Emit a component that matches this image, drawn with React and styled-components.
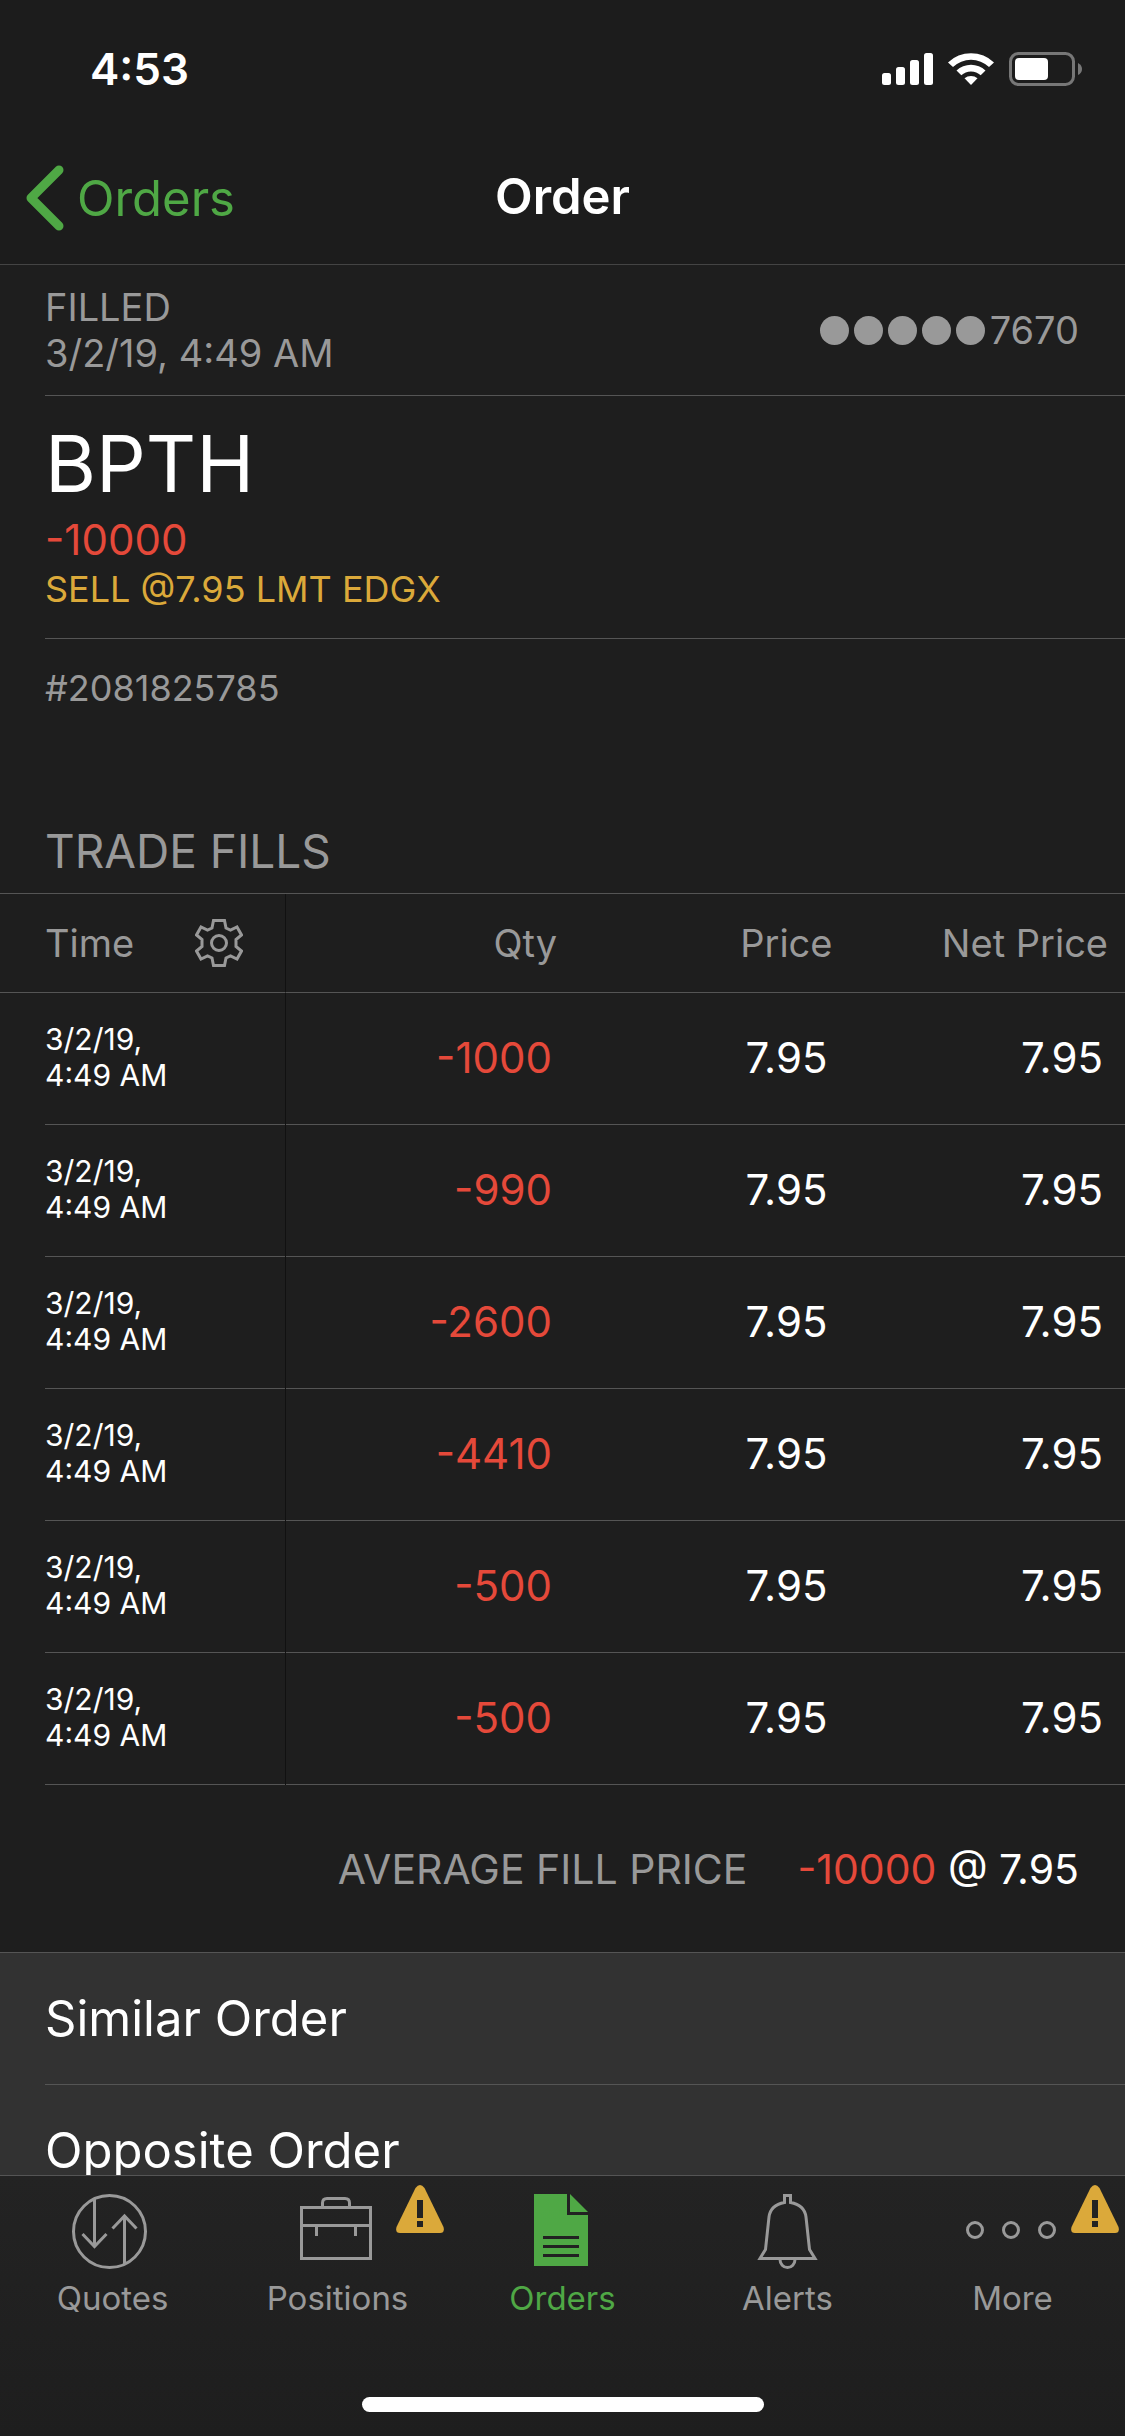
import React from "react";
import styled, { createGlobalStyle } from "styled-components";

const fills = [
  { id: 1, date: "3/2/19,", time: "4:49 AM", qty: "-1000", price: "7.95", net: "7.95" },
  { id: 2, date: "3/2/19,", time: "4:49 AM", qty: "-990", price: "7.95", net: "7.95" },
  { id: 3, date: "3/2/19,", time: "4:49 AM", qty: "-2600", price: "7.95", net: "7.95" },
  { id: 4, date: "3/2/19,", time: "4:49 AM", qty: "-4410", price: "7.95", net: "7.95" },
  { id: 5, date: "3/2/19,", time: "4:49 AM", qty: "-500", price: "7.95", net: "7.95" },
  { id: 6, date: "3/2/19,", time: "4:49 AM", qty: "-500", price: "7.95", net: "7.95" },
];

const QuotesIcon = () => (
  <TabIcon viewBox="0 0 81 76">
    <circle cx="37.5" cy="37.5" r="36" />
    <path d="M22.5 5v47M10.5 40l12 12.5 12-12.5M52.5 70V23M40.500 34.500l12-12.500 12 12.500" />
  </TabIcon>
);

const PositionsIcon = () => (
  <TabIcon viewBox="0 0 81 76">
    <path d="M4.500 13.500h69v51h-69zM4.500 31.500h69M19.500 32v10M58.500 32v10M25.500 13v-4q0-4.500 4.500-4.500h18q4.500 0 4.500 4.500v4" />
  </TabIcon>
);

const OrdersIcon = () => (
  <TabIcon viewBox="0 0 81 76">
    <path
      fill="currentColor"
      stroke="none"
      fillRule="evenodd"
      d="M12 0h33v21h21v51H12zM21 42v3h36v-3zM21 51v3h36v-3zM21 60v3h36v-3zM48 0l18 18H48z"
    />
  </TabIcon>
);

const AlertsIcon = () => (
  <TabIcon viewBox="0 0 81 76">
    <path d="M37.500 8.500v-7h6v7C52 10 58 15 59 23l3.500 32.500 5.500 9h-55l5.500-9L22 23c1-8 7-13 15.500-14.500z" />
    <path d="M33 65.500a7.500 8 0 0 0 15 0" />
  </TabIcon>
);

const MoreIcon = () => (
  <TabIcon viewBox="0 0 81 76">
    <circle cx="3" cy="36" r="7.500" />
    <circle cx="39" cy="36" r="7.500" />
    <circle cx="75" cy="36" r="7.500" />
  </TabIcon>
);

const tabs = [
  { label: "Quotes", icon: <QuotesIcon /> },
  { label: "Positions", icon: <PositionsIcon />, warning: true },
  { label: "Orders", icon: <OrdersIcon />, active: true },
  { label: "Alerts", icon: <AlertsIcon /> },
  { label: "More", icon: <MoreIcon />, warning: true },
];

export default function App() {
  return (
    <Screen>
      <GlobalStyle />
      <StatusBar>
        <span>4:53</span>
        <StatusIcons viewBox="0 0 200 34" aria-hidden="true">
          <g fill="#fff">
            <rect x="0" y="21" width="9" height="12" rx="2.500" />
            <rect x="14" y="15" width="9" height="18" rx="2.500" />
            <rect x="28" y="8" width="9" height="25" rx="2.500" />
            <rect x="42" y="1" width="9" height="32" rx="2.500" />
            <path d="M66 10.500a33 33 0 0 1 46 0l-5 4.500a26 26 0 0 0-36 0z" />
            <path d="M74.500 18.500a21 21 0 0 1 29 0l-4.800 4.800a14 14 0 0 0-19.400 0z" />
            <path d="M82.500 26.300a10 10 0 0 1 13 0L89 33z" />
            <rect x="133" y="6" width="33" height="22" rx="4" />
          </g>
          <rect x="128.500" y="1.500" width="63" height="31" rx="8" fill="none" stroke="#777" strokeWidth="3" />
          <path d="M196 11q4 2 4 6t-4 6z" fill="#777" />
        </StatusIcons>
      </StatusBar>
      <NavBar>
        <BackLink href="#orders">
          <Chevron viewBox="0 0 38 66" aria-hidden="true">
            <path d="M33 5L5 33l28 28" />
          </Chevron>
          Orders
        </BackLink>
        <Title>Order</Title>
      </NavBar>

      <Content>
        <Account>
          <div>
            FILLED
            <br />
            3/2/19, 4:49 AM
          </div>
          <AccountNumber>
            <Dot />
            <Dot />
            <Dot />
            <Dot />
            <Dot />
            7670
          </AccountNumber>
        </Account>
        <Summary>
          <Symbol>BPTH</Symbol>
          <Quantity>-10000</Quantity>
          <Detail>SELL @7.95 LMT EDGX</Detail>
        </Summary>
        <OrderId>#2081825785</OrderId>

        <SectionTitle>TRADE FILLS</SectionTitle>
        <Table>
          <thead>
            <tr>
              <TimeHead>
                <TimeLabel>
                  Time
                  <GearButton aria-label="Column settings">
                    <svg width="48" height="48" viewBox="0 0 48 48" fill="none" stroke="currentColor" strokeWidth="3">
                      <path d="M18.500 1.500h11l1.500 7.500 4.500 2 6.500-3 4.500 8-5.500 4.500v7l5.500 4.500-4.500 8-6.500-3-4.500 2-1.500 7.500h-11L17 39l-4.500-2L6 40l-4.500-8L7 27.500v-7L1.500 16 6 8l6.500 3L17 9z" />
                      <circle cx="24" cy="24" r="7.500" />
                    </svg>
                  </GearButton>
                </TimeLabel>
              </TimeHead>
              <QtyHead>Qty</QtyHead>
              <Head>Price</Head>
              <Head>Net Price</Head>
            </tr>
          </thead>
          <tbody>
            {fills.map((fill) => (
              <tr key={fill.id}>
                <TimeCell>
                  <FillTime>
                    {fill.date}
                    <br />
                    {fill.time}
                  </FillTime>
                </TimeCell>
                <Cell $negative>{fill.qty}</Cell>
                <Cell>{fill.price}</Cell>
                <Cell>{fill.net}</Cell>
              </tr>
            ))}
          </tbody>
        </Table>
        <Average>
          <AverageLabel>AVERAGE FILL PRICE</AverageLabel>
          <span>
            <Negative>-10000</Negative> @ 7.95
          </span>
        </Average>

        <Actions>
          <ActionButton>Similar Order</ActionButton>
          <ActionButton>Opposite Order</ActionButton>
        </Actions>
      </Content>

      <TabBar>
        <Tabs>
          {tabs.map((tab) => (
            <Tab key={tab.label} href={"#" + tab.label.toLowerCase()} $active={tab.active}>
              {tab.icon}
              {tab.label}
              {tab.warning && (
                <Warning viewBox="0 0 48 48" aria-hidden="true">
                  <path d="M19.500 3Q24-3 28.500 3L47.500 42Q49 48 44 48H4Q-1 48 .500 42z" fill="#dba93a" />
                  <path d="M21 15h6v18h-6zM21 36h6v6h-6z" fill="#222" />
                </Warning>
              )}
            </Tab>
          ))}
        </Tabs>
        <HomeIndicator />
      </TabBar>
    </Screen>
  );
}

const GlobalStyle = createGlobalStyle`
  * {
    box-sizing: border-box;
  }
  body {
    margin: 0;
    background: #1e1e1e;
    color: #fff;
    font-family: Inter, "Liberation Sans", sans-serif;
  }
  button {
    font-family: inherit;
    color: inherit;
    background: none;
    border: 0;
    padding: 0;
    cursor: pointer;
  }
`;
const Screen = styled.div`
  display: flex;
  flex-direction: column;
  height: 100vh;
`;
const StatusBar = styled.div`
  display: flex;
  flex: none;
  align-items: center;
  justify-content: space-between;
  height: 132px;
  padding: 6px 43px 0 90px;
  background: #1c1c1c;
  font-size: 44px;
  font-weight: 600;
`;
const StatusIcons = styled.svg`
  width: 200px;
  height: 34px;
`;
const NavBar = styled.header`
  display: grid;
  flex: none;
  grid-template-columns: 1fr auto 1fr;
  align-items: center;
  height: 133px;
  padding: 0 26px;
  background: #1c1c1c;
  border-bottom: 1px solid #444;
`;
const BackLink = styled.a`
  display: flex;
  align-items: center;
  gap: 13px;
  color: #4fa845;
  font-size: 49px;
  text-decoration: none;
`;
const Chevron = styled.svg`
  width: 38px;
  height: 66px;
  fill: none;
  stroke: currentColor;
  stroke-width: 9;
  stroke-linecap: round;
  stroke-linejoin: round;
`;
const Title = styled.h1`
  margin: 0;
  padding-bottom: 4px;
  font-size: 49px;
  font-weight: 600;
`;
const Content = styled.main`
  flex: 1;
  min-height: 0;
  overflow: hidden;
`;
const Account = styled.section`
  display: flex;
  align-items: center;
  justify-content: space-between;
  height: 131px;
  margin-left: 45px;
  padding-right: 46px;
  border-bottom: 1px solid #555;
  color: #999;
  font-size: 38px;
  line-height: 46px;
`;
const AccountNumber = styled.div`
  display: flex;
  align-items: center;
  gap: 5px;
`;
const Dot = styled.span`
  width: 29px;
  height: 29px;
  border-radius: 50%;
  background: #999;
`;
const Summary = styled.section`
  margin-left: 45px;
  padding: 20px 0 28px;
  border-bottom: 1px solid #555;
`;
const Symbol = styled.h2`
  margin: 0;
  font-size: 78px;
  font-weight: 400;
  line-height: 96px;
`;
const Quantity = styled.div`
  color: #e5493a;
  font-size: 42px;
  line-height: 56px;
`;
const Detail = styled.div`
  color: #dba93a;
  font-size: 36px;
  line-height: 42px;
`;
const OrderId = styled.div`
  padding-left: 45px;
  color: #999;
  font-size: 36px;
  line-height: 98px;
`;
const SectionTitle = styled.h3`
  margin: 0;
  padding: 84px 45px 12px;
  border-bottom: 1px solid #555;
  color: #999;
  font-size: 46px;
  font-weight: 400;
  line-height: 60px;
`;
const Table = styled.table`
  width: 100%;
  table-layout: fixed;
  border-collapse: separate;
  border-spacing: 0;
`;
const Head = styled.th`
  height: 99px;
  padding: 0 17px 0 0;
  border-bottom: 1px solid #555;
  color: #999;
  font-size: 38px;
  font-weight: 400;
  text-align: right;
  white-space: nowrap;
`;
const TimeHead = styled(Head)`
  width: 286px;
  padding: 0 42px 0 45px;
  border-right: 1px solid #111;
`;
const QtyHead = styled(Head)`
  width: 288px;
`;
const TimeLabel = styled.div`
  display: flex;
  align-items: center;
  justify-content: space-between;
`;
const GearButton = styled.button`
  display: flex;
`;
const Cell = styled.td`
  height: 132px;
  padding: 0 22px 3px 0;
  border-bottom: 1px solid #555;
  color: ${(props) => (props.$negative ? "#e5493a" : "#fff")};
  font-size: 42px;
  text-align: right;
`;
const TimeCell = styled.td`
  padding: 0 0 0 45px;
  border-right: 1px solid #111;
`;
const FillTime = styled.div`
  display: flow-root;
  height: 132px;
  padding-top: 28px;
  border-bottom: 1px solid #555;
  font-size: 30px;
  line-height: 36px;
`;
const Average = styled.div`
  display: flex;
  align-items: center;
  justify-content: flex-end;
  gap: 50px;
  height: 167px;
  padding-right: 46px;
  font-size: 41px;
`;
const AverageLabel = styled.span`
  color: #999;
`;
const Negative = styled.span`
  color: #e5493a;
`;
const Actions = styled.div`
  padding-left: 45px;
  background: #323232;
  border-top: 1px solid #555;
`;
const ActionButton = styled.button`
  display: block;
  width: 100%;
  height: 132px;
  border-bottom: 1px solid #555;
  font-size: 49px;
  text-align: left;
`;
const TabBar = styled.footer`
  flex: none;
  height: 261px;
  background: linear-gradient(#232323, #1e1e1e);
  border-top: 1px solid #555;
`;
const Tabs = styled.nav`
  display: flex;
  height: 221px;
`;
const Tab = styled.a`
  position: relative;
  display: flex;
  flex: 1;
  flex-direction: column;
  align-items: center;
  gap: 8px;
  padding-top: 18px;
  color: ${(props) => (props.$active ? "#4fa845" : "#999")};
  font-size: 33px;
  line-height: 40px;
  text-decoration: none;
`;
const TabIcon = styled.svg`
  width: 81px;
  height: 76px;
  overflow: visible;
  fill: none;
  stroke: currentColor;
  stroke-width: 3;
`;
const Warning = styled.svg`
  position: absolute;
  top: 9px;
  left: calc(50% + 58px);
  width: 48px;
  height: 48px;
`;
const HomeIndicator = styled.div`
  width: 402px;
  height: 15px;
  margin: 0 auto;
  border-radius: 8px;
  background: #fff;
`;
